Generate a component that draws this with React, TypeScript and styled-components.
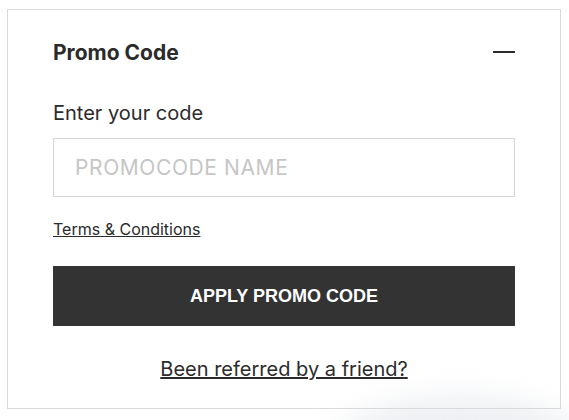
import React, { useState } from 'react';
import styled, { createGlobalStyle } from 'styled-components';

const GlobalStyle = createGlobalStyle`
    body {
        margin: 0;
        background: #ffffff;
        font-family: Inter, "Noto Sans", sans-serif;
        color: #2b2b2b;
    }
`;

const Page = styled.div`
    padding: 9px 8px 10px 7px;
    position: relative;
    height: 420px;
    box-sizing: border-box;
    overflow: hidden;
`;

const Card = styled.section`
    border: 1px solid #d9d9d9;
    padding: 28px 45px 26px 45px;
    display: flex;
    flex-direction: column;
    position: relative;
    z-index: 1;
`;

const Header = styled.header`
    display: flex;
    justify-content: space-between;
    align-items: center;
    height: 28px;
`;

const Title = styled.h2`
    margin: 0;
    font-size: 21px;
    font-weight: 700;
    color: #2b2b2b;
`;

const Toggle = styled.button`
    border: none;
    background: none;
    padding: 0;
    width: 22px;
    height: 22px;
    display: flex;
    align-items: center;
    cursor: pointer;
    &::before {
        content: '';
        display: block;
        width: 22px;
        height: 2px;
        background: #2b2b2b;
    }
`;

const Label = styled.label`
    margin-top: 35px;
    font-size: 20px;
    line-height: 24px;
    color: #2b2b2b;
`;

const Input = styled.input`
    margin-top: 13px;
    height: 59px;
    box-sizing: border-box;
    border: 1px solid #d6d6d6;
    background: transparent;
    padding: 0 21px;
    font-family: inherit;
    font-size: 21px;
    letter-spacing: 0.6px;
    outline: none;
    &::placeholder {
        color: #c6c6c6;
    }
`;

const TermsLink = styled.a`
    margin-top: 22px;
    align-self: flex-start;
    font-size: 16px;
    line-height: 20px;
    color: #2b2b2b;
    text-decoration: underline;
`;

const ApplyButton = styled.button`
    margin-top: 27px;
    height: 60px;
    border: none;
    background: #333333;
    color: #ffffff;
    font-family: "Liberation Sans", Arial, sans-serif;
    font-weight: 700;
    font-size: 18px;
    cursor: pointer;
`;

const ReferLink = styled.a`
    margin-top: 30px;
    align-self: center;
    font-size: 20px;
    line-height: 26px;
    color: #2b2b2b;
    text-decoration: underline;
`;

const Glow = styled.div`
    position: absolute;
    left: 330px;
    top: 395px;
    width: 260px;
    height: 120px;
    border-radius: 50%;
    background: #eef0f3;
    filter: blur(14px);
`;

function App() {
    const [open, setOpen] = useState(true);
    return (
        <Page>
            <GlobalStyle />
            <Glow />
            <Card>
                <Header>
                    <Title>Promo Code</Title>
                    <Toggle aria-label="Collapse" onClick={() => setOpen(!open)} />
                </Header>
                <Label htmlFor="promo">Enter your code</Label>
                <Input id="promo" placeholder="PROMOCODE NAME" />
                <TermsLink href="#">Terms &amp; Conditions</TermsLink>
                <ApplyButton>APPLY PROMO CODE</ApplyButton>
                <ReferLink href="#">Been referred by a friend?</ReferLink>
            </Card>
        </Page>
    );
}

export default App;
